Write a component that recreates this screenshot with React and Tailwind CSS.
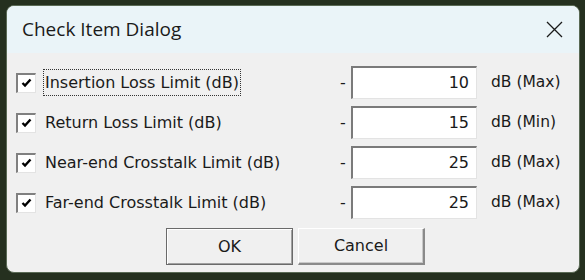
const rows = [
  { label: 'Insertion Loss Limit (dB)', value: '10', unit: 'dB (Max)', focus: true },
  { label: 'Return Loss Limit (dB)', value: '15', unit: 'dB (Min)' },
  { label: 'Near-end Crosstalk Limit (dB)', value: '25', unit: 'dB (Max)' },
  { label: 'Far-end Crosstalk Limit (dB)', value: '25', unit: 'dB (Max)' },
]

function CheckBox() {
  return (
    <div className="w-[20px] h-[20px] bg-white border-t-2 border-l-2 border-[#808080] border-b border-r border-b-[#e3e3e3] border-r-[#e3e3e3] flex items-center justify-center">
      <svg width="11" height="10" viewBox="0 0 11 10">
        <path d="M1.5 5 L4 7.5 L9.5 1.5" fill="none" stroke="#000" strokeWidth="2.4" />
      </svg>
    </div>
  )
}

export default function App() {
  return (
    <div className="w-[585px] h-[280px] bg-[#25301f] pt-[5px] pl-[6px] overflow-hidden" style={{ fontFamily: '"DejaVu Sans", sans-serif' }}>
      <div className="w-[574px] h-[268px] rounded-[8px] overflow-hidden bg-[#f0f0f0] border border-[#5a6a55] flex flex-col">
        <div className="h-[47px] bg-[#eaf4f8] flex items-center justify-between pl-[15px] pr-[16px] shrink-0">
          <span className="text-[19px] text-[#1a1a1a]" style={{ fontFamily: '"Open Sans", sans-serif' }}>Check Item Dialog</span>
          <svg width="17" height="17" viewBox="0 0 17 17">
            <path d="M1 1 L16 16 M16 1 L1 16" stroke="#1a1a1a" strokeWidth="1.3" />
          </svg>
        </div>
        <div className="flex flex-col gap-[7px] pt-[13px]">
          {rows.map((r) => (
            <div key={r.label} className="flex items-center h-[33px]">
              <div className="ml-[9px] w-[28px]">
                <CheckBox />
              </div>
              <div className="w-[296px]">
                <span className={`text-[16px] text-[#1a1a1a] px-[1px] py-[3px] ${r.focus ? 'outline-1 outline-dotted outline-[#333]' : ''}`}>
                  {r.label}
                </span>
              </div>
              <span className="w-[11px] text-[16px] text-[#1a1a1a]">-</span>
              <div className="w-[126px] h-[33px] bg-white border-t-2 border-l-2 border-[#7a7a7a] border-b border-r border-b-[#e3e3e3] border-r-[#e3e3e3] flex items-center justify-end pr-[7px] text-[16px] text-[#1a1a1a]">
                {r.value}
              </div>
              <span className="ml-[14px] text-[15.5px] text-[#1a1a1a]">{r.unit}</span>
            </div>
          ))}
        </div>
        <div className="flex gap-[5px] mt-[9px] ml-[159px]">
          <button className="w-[127px] h-[37px] bg-[#f0f0f0] border border-[#6a6a6a] shadow-[inset_1px_1px_0_#fff,inset_-1px_-1px_0_#a0a0a0] text-[16px] text-[#1a1a1a] flex items-center justify-center">OK</button>
          <button className="w-[127px] h-[37px] bg-[#f0f0f0] border-t border-l border-[#fff] border-b-2 border-r-2 border-b-[#8a8a8a] border-r-[#8a8a8a] shadow-[inset_-1px_-1px_0_#c8c8c8] text-[16px] text-[#1a1a1a] flex items-center justify-center">Cancel</button>
        </div>
      </div>
    </div>
  )
}
